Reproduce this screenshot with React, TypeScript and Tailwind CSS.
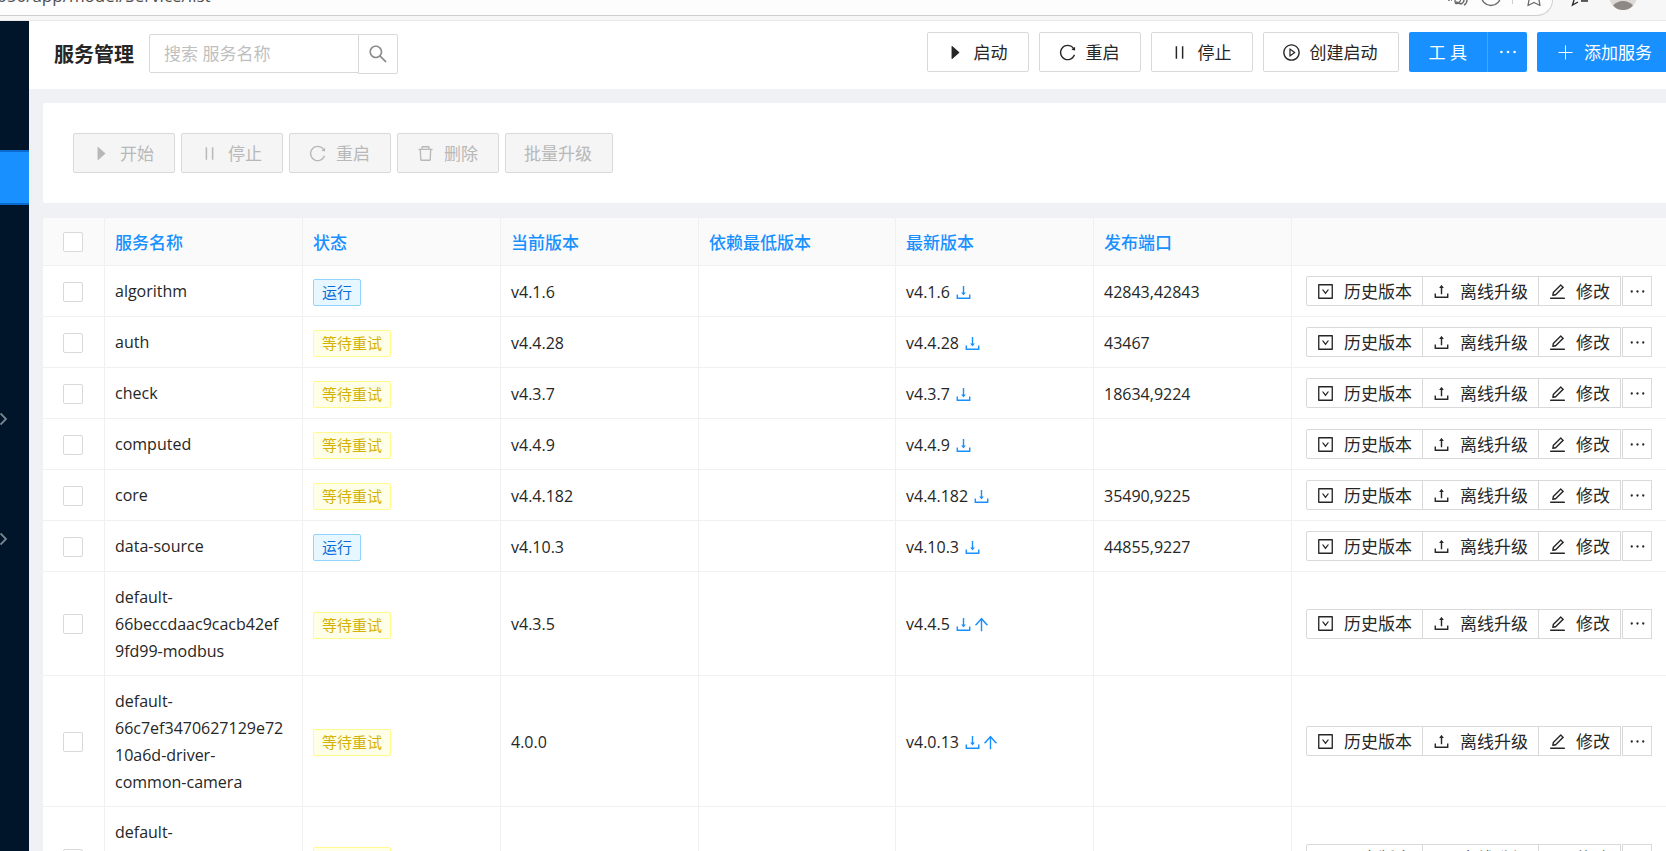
import type { ReactNode } from 'react';
import {
  AiFillCaretRight,
  AiOutlineArrowUp,
  AiOutlineDelete,
  AiOutlineDownload,
  AiOutlineDownSquare,
  AiOutlineEdit,
  AiOutlineEllipsis,
  AiOutlinePause,
  AiOutlinePlayCircle,
  AiOutlineReload,
  AiOutlineSearch,
  AiOutlineUpload,
} from 'react-icons/ai';

interface Service {
  name: string;
  running?: boolean;
  current: string;
  latest: string;
  upgradable?: boolean;
  ports?: string;
}

const services: Service[] = [
  { name: 'algorithm', running: true, current: 'v4.1.6', latest: 'v4.1.6', ports: '42843,42843' },
  { name: 'auth', current: 'v4.4.28', latest: 'v4.4.28', ports: '43467' },
  { name: 'check', current: 'v4.3.7', latest: 'v4.3.7', ports: '18634,9224' },
  { name: 'computed', current: 'v4.4.9', latest: 'v4.4.9' },
  { name: 'core', current: 'v4.4.182', latest: 'v4.4.182', ports: '35490,9225' },
  { name: 'data-source', running: true, current: 'v4.10.3', latest: 'v4.10.3', ports: '44855,9227' },
  { name: 'default-66beccdaac9cacb42ef9fd99-modbus', current: 'v4.3.5', latest: 'v4.4.5', upgradable: true },
  { name: 'default-66c7ef3470627129e7210a6d-driver-common-camera', current: '4.0.0', latest: 'v4.0.13', upgradable: true },
  { name: 'default-', current: '', latest: '' },
];

const columns = [
  { title: '服务名称', width: 'w-[198px]' },
  { title: '状态', width: 'w-[198px]' },
  { title: '当前版本', width: 'w-[198px]' },
  { title: '依赖最低版本', width: 'w-[197px]' },
  { title: '最新版本', width: 'w-[198px]' },
  { title: '发布端口', width: 'w-[198px]' },
];

function BrowserBar() {
  return (
    <div className="flex h-[21px] shrink-0 items-start overflow-hidden border-b border-[#e8e8e8] bg-[#f7f7f7]">
      <div className="flex h-4 min-w-0 flex-1 items-start rounded-br-[16px] border-r border-b border-[#cfcfcf] bg-[#fdfdfd] pr-[11px]">
        <span className="-mt-[15px] -ml-[3px] flex-1 text-[17px] leading-[22px] whitespace-nowrap text-[#4f4f4f]">050/app/model/Service/list</span>
        <svg viewBox="0 0 22 8" className="h-2 w-[22px]" fill="none" stroke="#6a6a6a" strokeWidth="1.4">
          <path d="M1 0h4" strokeDasharray="2 1" />
          <path d="M8 0c0 4 1 4 3 3s3-3 2-3M9 2l5 2M14 4c2-1 3-2 3-4M17 5c2-1 3-3 3-5" />
        </svg>
        <svg viewBox="0 0 22 8" className="ml-[11px] h-2 w-[22px]" fill="none" stroke="#6a6a6a" strokeWidth="1.4">
          <circle cx="11" cy="-4" r="9.5" />
        </svg>
        <span className="ml-[10px] h-1 w-px bg-[#cfcfcf]" />
        <svg viewBox="0 0 14 8" className="ml-[14px] h-2 w-[14px]" fill="none" stroke="#6a6a6a" strokeWidth="1.3">
          <path d="M2 0 1 5.5 7 2.5 13 5.5 12 0" strokeLinejoin="round" />
        </svg>
      </div>
      <div className="flex w-[113px] items-start pl-[18px]">
        <svg viewBox="0 0 20 8" className="h-2 w-5" fill="none" stroke="#2b2b2b" strokeWidth="1.4">
          <path d="M3 0 1.5 5 7 2" />
          <path d="M10 0.7h7" strokeWidth="2.4" stroke="#555" />
        </svg>
        <svg viewBox="0 0 28 11" className="ml-[18px] h-[11px] w-7">
          <circle cx="14" cy="-4" r="14" fill="#dcd9d6" />
          <path d="M4 5.500Q8 1 14 1t10 4.500Q20 10 14 10T4 5.500Z" fill="#8d8885" />
        </svg>
      </div>
    </div>
  );
}

function SideChevron() {
  return (
    <svg viewBox="0 0 8 14" className="h-[14px] w-2" fill="none" stroke="#7a858f" strokeWidth="1.8">
      <path d="M0.5 1.5 6 7 0.5 12.5" />
    </svg>
  );
}

function PlusIcon() {
  return (
    <svg viewBox="0 0 19 19" className="size-[19px]" stroke="currentColor" strokeWidth="1">
      <path d="M9.500 2.500v14M2.500 9.500h14" />
    </svg>
  );
}

function Sidebar() {
  return (
    <nav className="flex w-[29px] shrink-0 flex-col bg-[#001529]">
      <a href="#services" aria-label="服务管理" className="mt-[129px] h-[55px] border-y-2 border-[#0a6ad0] bg-[#1890ff]" />
      <a href="#group-1" aria-label="展开菜单" className="mt-[186px] flex h-[55px] items-center"><SideChevron /></a>
      <a href="#group-2" aria-label="展开菜单" className="mt-[65px] flex h-[55px] items-center"><SideChevron /></a>
    </nav>
  );
}

function ToolButton({ icon, children, disabled }: { icon?: ReactNode; children: ReactNode; disabled?: boolean }) {
  return (
    <button
      type="button"
      disabled={disabled}
      className="flex h-10 shrink-0 items-center gap-[9px] rounded-[2px] border border-[#d9d9d9] bg-white pr-5 pl-[18px] whitespace-nowrap text-[#262626] disabled:bg-[#f5f5f5] disabled:text-[#b8b8b8]"
    >
      {icon && <span className="text-[19px]">{icon}</span>}
      <span className="pt-0.5">{children}</span>
    </button>
  );
}

function PageHeader() {
  return (
    <header className="flex h-[68px] items-center justify-between bg-white pl-[25px]">
      <div className="flex items-center">
        <h1 className="text-[20px] font-bold whitespace-nowrap text-[#262626]">服务管理</h1>
        <form className="mb-[2px] ml-[15px] flex" onSubmit={(e) => e.preventDefault()}>
          <input
            type="text"
            aria-label="搜索 服务名称"
            placeholder="搜索 服务名称"
            className="h-[39px] w-[210px] rounded-l-[2px] border border-[#d9d9d9] px-[14px] outline-none placeholder:text-[#bfbfbf]"
          />
          <button type="submit" aria-label="搜索" className="-ml-px flex h-10 w-10 items-center justify-center rounded-r-[2px] border border-[#d9d9d9] text-[22px] text-[#8c8c8c]">
            <AiOutlineSearch />
          </button>
        </form>
      </div>
      <div className="-mr-[7px] flex gap-[10px] pb-[6px]">
        <ToolButton icon={<AiFillCaretRight />}>启动</ToolButton>
        <ToolButton icon={<AiOutlineReload />}>重启</ToolButton>
        <ToolButton icon={<AiOutlinePause />}>停止</ToolButton>
        <ToolButton icon={<AiOutlinePlayCircle />}>创建启动</ToolButton>
        <div className="flex h-10 text-white">
          <button type="button" className="rounded-l-[2px] bg-[#1890ff] px-5 pt-0.5 whitespace-nowrap">工 具</button>
          <button type="button" aria-label="更多工具" className="flex w-10 items-center justify-center rounded-r-[2px] border-l border-[#40a9ff] bg-[#1890ff] text-[24px]">
            <AiOutlineEllipsis />
          </button>
        </div>
        <button type="button" className="flex h-10 items-center gap-[9px] rounded-l-[2px] bg-[#1890ff] pr-[21px] pl-[19px] whitespace-nowrap text-white">
          <PlusIcon />
          <span className="pt-0.5">添加服务</span>
        </button>
      </div>
    </header>
  );
}

function BatchBar() {
  return (
    <section className="mt-[14px] flex gap-[6px] rounded-l-[2px] bg-white p-[30px]">
      <ToolButton disabled icon={<AiFillCaretRight />}>开始</ToolButton>
      <ToolButton disabled icon={<AiOutlinePause />}>停止</ToolButton>
      <ToolButton disabled icon={<AiOutlineReload />}>重启</ToolButton>
      <ToolButton disabled icon={<AiOutlineDelete />}>删除</ToolButton>
      <ToolButton disabled>批量升级</ToolButton>
    </section>
  );
}

function StatusTag({ running }: { running?: boolean }) {
  const color = running ? 'border-[#91d5ff] bg-[#e6f7ff] text-[#096dd9]' : 'border-[#fffb8f] bg-[#feffe6] text-[#d4b106]';
  return <span className={`inline-block rounded-[2px] border px-2 align-middle text-[15px] leading-[25px] ${color}`}>{running ? '运行' : '等待重试'}</span>;
}

function Checkbox({ label }: { label: string }) {
  return <input type="checkbox" aria-label={label} className="mx-auto block size-5 appearance-none rounded-[2px] border border-[#d9d9d9] bg-white checked:bg-[#1890ff]" />;
}

function RowAction({ icon, children }: { icon: ReactNode; children: ReactNode }) {
  return (
    <button type="button" className="-ml-px flex h-[30px] items-center gap-[9px] border border-[#d9d9d9] bg-white pr-[10px] pl-[9px] whitespace-nowrap first:ml-0 first:rounded-l-[2px]">
      <span className="text-[19px]">{icon}</span>
      {children}
    </button>
  );
}

function ServiceRow({ service }: { service: Service }) {
  const cell = 'border-r border-b border-[#f0f0f0] pl-[10px]';
  return (
    <tr className="h-[51px] last:h-[104px]">
      <td className="border-r border-b border-[#f0f0f0] pt-px pr-0.5"><Checkbox label={service.name} /></td>
      <td className={`${cell} pt-3 pr-4 pb-[10px] align-top break-words`}>{service.name}</td>
      <td className={`${cell} pt-0.5`}><StatusTag running={service.running} /></td>
      <td className={`${cell} pt-0.5`}>{service.current}</td>
      <td className={cell} />
      <td className={`${cell} pt-0.5`}>
        <span className="flex items-center">
          {service.latest}
          {service.latest && <AiOutlineDownload className="ml-1 text-[19px] text-[#1890ff]" />}
          {service.upgradable && <AiOutlineArrowUp className="-ml-px text-[19px] text-[#1890ff]" />}
        </span>
      </td>
      <td className={`${cell} pt-0.5`}>{service.ports}</td>
      <td className="border-b border-[#f0f0f0] pl-[14px]">
        <div className="flex text-[17px]">
          <RowAction icon={<AiOutlineDownSquare />}>历史版本</RowAction>
          <RowAction icon={<AiOutlineUpload />}>离线升级</RowAction>
          <RowAction icon={<AiOutlineEdit />}>修改</RowAction>
          <button type="button" aria-label="更多操作" className="ml-px flex h-[30px] w-[30px] items-center justify-center border border-[#d9d9d9] bg-white text-[21px]">
            <AiOutlineEllipsis />
          </button>
        </div>
      </td>
    </tr>
  );
}

function ServiceTable() {
  return (
    <table className="mt-[15px] w-full table-fixed border-separate border-spacing-0 bg-white text-[16px] leading-[27px] text-[#262626]">
      <colgroup>
        <col className="w-[62px]" />
        {columns.map((c) => <col key={c.title} className={c.width} />)}
        <col />
      </colgroup>
      <thead>
        <tr className="h-12 bg-[#fafafa] text-left text-[17px] text-[#1890ff]">
          <th className="border-r border-b border-[#f0f0f0] pr-0.5"><Checkbox label="全选" /></th>
          {columns.map((c) => <th key={c.title} className="border-r border-b border-[#f0f0f0] pt-0.5 pl-[10px] font-medium">{c.title}</th>)}
          <th className="border-b border-[#f0f0f0]" aria-label="操作" />
        </tr>
      </thead>
      <tbody>
        {services.map((s) => <ServiceRow key={s.name} service={s} />)}
      </tbody>
    </table>
  );
}

export default function App() {
  return (
    <div className="flex h-screen flex-col overflow-hidden font-['Open_Sans','Noto_Sans_CJK_SC',sans-serif] text-[17px]">
      <BrowserBar />
      <div className="flex min-h-0 flex-1">
        <Sidebar />
        <main className="min-w-0 flex-1 overflow-hidden bg-[#f0f1f5]">
          <PageHeader />
          <div className="pl-[14px]">
            <BatchBar />
            <ServiceTable />
          </div>
        </main>
      </div>
    </div>
  );
}
